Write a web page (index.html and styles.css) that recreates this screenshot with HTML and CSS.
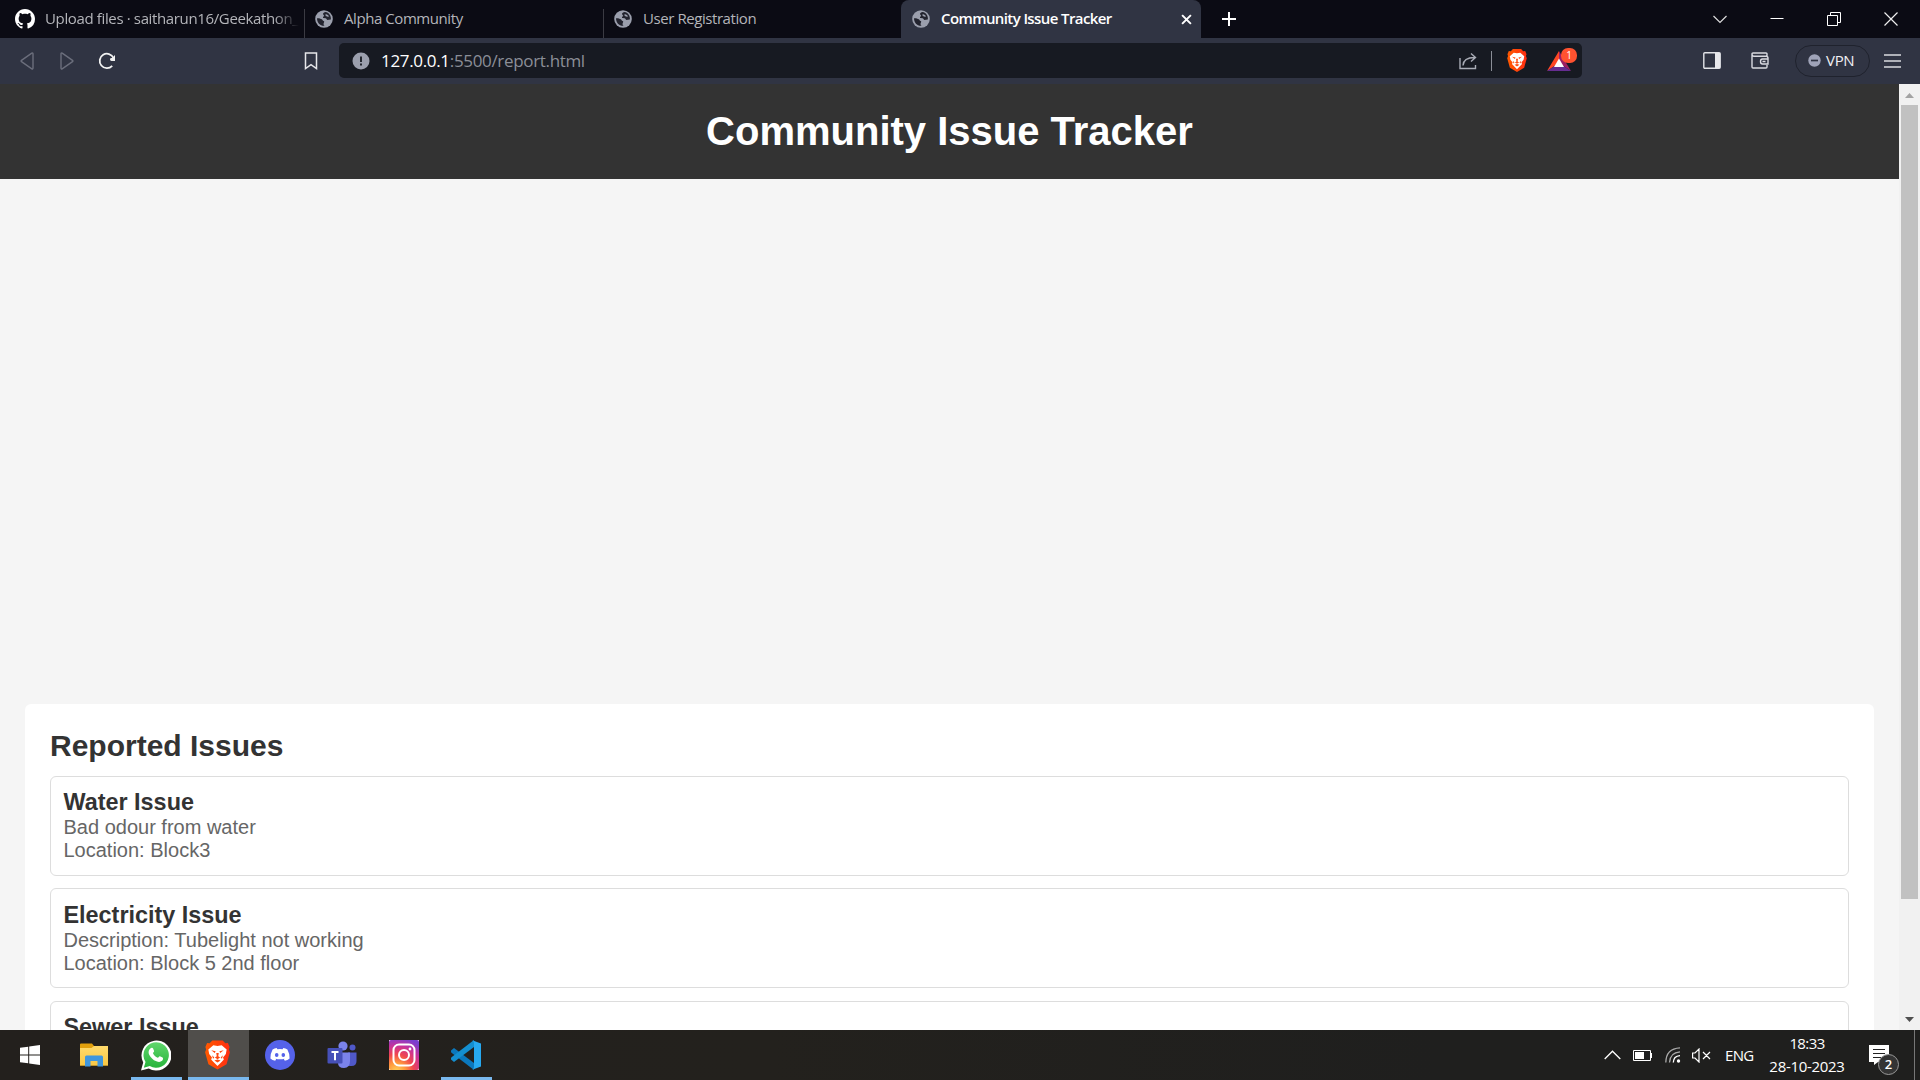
FILE: index.html
```html
<!DOCTYPE html>
<html lang="en">
<head>
<meta charset="utf-8">
<title>Community Issue Tracker</title>
<link rel="stylesheet" href="styles.css">
</head>
<body>
<svg class="defs" width="0" height="0" aria-hidden="true">
  <defs>
    <linearGradient id="lionFill" x1="0" x2="1"><stop offset="0" stop-color="#ff5a00"/><stop offset="1" stop-color="#ff2d12"/></linearGradient>
    <linearGradient id="folderFill" x1="0" y1="0" x2="0" y2="1"><stop offset="0" stop-color="#ffda6b"/><stop offset="1" stop-color="#f8c745"/></linearGradient>
    <linearGradient id="phoneFill" x1="0" y1="0" x2="0" y2="1"><stop offset="0" stop-color="#5fd66c"/><stop offset="1" stop-color="#28b43c"/></linearGradient>
    <radialGradient id="instaFill" cx="0.25" cy="1.05" r="1.15"><stop offset="0" stop-color="#ffd35b"/><stop offset=".25" stop-color="#ff9b3d"/><stop offset=".5" stop-color="#f0464f"/><stop offset=".75" stop-color="#c8329b"/><stop offset="1" stop-color="#7a3fd0"/></radialGradient>
    <symbol id="globe" viewBox="0 0 18 18">
      <circle cx="9" cy="9" r="8.800" fill="#9b9fad"/>
      <path d="M2 8.200c2.300-.1 3.600.5 4.800 1.100 1 .5.700 1.500 1.800 1.800.9.300.7 1.100.2 1.900-.5.900-.3 1.700.7 2.700C5.200 16 2 12.800 2 8.200z" fill="#23242f"/>
      <path d="M10.500 2.100c-1.300.5-2.400.7-2.500 1.900 0 .9 1.100.8 1 1.800-.1.900-1.200.9-1 1.700.2.900 1.900.4 2.800.8 1 .5.700 1.500 1.900 1.600 1.100.1 1.800-.4 3.200-.4C16.300 5.600 13.800 2.700 10.500 2.100z" fill="#23242f"/>
      <path d="M10.500 4.300c1.400-.4 2.900.7 3.400 2.100-1.200.6-2.700.1-3.400-.8z" fill="#9b9fad"/>
    </symbol>
    <symbol id="lion" viewBox="0 0 24 28">
      <path d="M7 0h10l2.500 2.700L22 2.500l1.600 3.800-.7 2.300 1 2.700-3.200 11.500L12 28l-8.700-5.200L.100 11.300l1-2.700-.7-2.300L2 2.500l2.500.2z" fill="url(#lionFill)"/>
      <path d="M8 4.600l4 .7 4-.7 4.800 4.200-.8 4.200-2.700 3.400.8 1.800-2 2.200-4.100 4.100-4.100-4.100-2-2.200.8-1.800L4 13l-.8-4.200z" fill="#fff"/>
      <path d="M6 9.500l4.200.8-.8 1.800zM18 9.500l-4.200.8.8 1.800zM10.800 12h2.400l-.5 3.300 1.800 1.200-2.500 1.500-2.500-1.500 1.800-1.200zM6.800 14.300l2.200 2.200-1.300 1zM17.200 14.300L15 16.500l1.300 1zM9 19.300l3-1 3 1-3 2z" fill="#ff4a10"/>
    </symbol>
  </defs>
</svg>

<div class="tabs">
  <div class="tab tab-first">
    <svg class="favicon octo" viewBox="0 0 16 16"><path fill="#fff" d="M8 0C3.580 0 0 3.580 0 8c0 3.540 2.290 6.530 5.470 7.590.4.070.55-.17.55-.38 0-.19-.010-.82-.010-1.490-2.010.37-2.530-.49-2.690-.94-.09-.23-.48-.94-.82-1.130-.28-.15-.68-.52-.010-.53.63-.010 1.080.58 1.230.82.72 1.210 1.870.87 2.330.66.070-.52.28-.87.51-1.070-1.780-.2-3.640-.89-3.640-3.950 0-.87.31-1.590.82-2.150-.08-.2-.36-1.020.08-2.120 0 0 .67-.21 2.200.82.64-.18 1.320-.27 2-.27s1.360.09 2 .27c1.530-1.040 2.200-.82 2.200-.82.44 1.100.16 1.920.08 2.120.51.56.82 1.270.82 2.150 0 3.070-1.870 3.750-3.650 3.950.29.25.54.73.54 1.480 0 1.070-.010 1.930-.010 2.200 0 .21.15.46.55.38A8.010 8.010 0 0 0 16 8c0-4.420-3.580-8-8-8z"/></svg>
    <span class="tab-title fade">Upload files · saitharun16/Geekathon_P</span>
  </div>
  <div class="tab">
    <svg class="favicon"><use href="#globe"/></svg>
    <span class="tab-title">Alpha Community</span>
  </div>
  <div class="tab last-idle">
    <svg class="favicon"><use href="#globe"/></svg>
    <span class="tab-title">User Registration</span>
  </div>
  <div class="tab active">
    <svg class="favicon"><use href="#globe"/></svg>
    <span class="tab-title">Community Issue Tracker</span>
    <svg class="tab-close" viewBox="0 0 10 10"><path d="M1 1l8 8M9 1L1 9" stroke="#fff" stroke-width="1.800"/></svg>
  </div>
  <svg class="new-tab" viewBox="0 0 16 16"><path d="M8 1v14M1 8h14" stroke="#fff" stroke-width="2"/></svg>
  <div class="window-buttons">
    <svg viewBox="0 0 14 14"><path d="M.5 4l6.500 6.500L13.500 4" fill="none" stroke="#ddd" stroke-width="1.200"/></svg>
    <svg viewBox="0 0 14 14"><path d="M.5 6.500h13" stroke="#fff"/></svg>
    <svg viewBox="0 0 14 14"><path d="M.5 3.500h10v10H.5zM3.500 3V.5h10v10H11" fill="none" stroke="#fff"/></svg>
    <svg viewBox="0 0 14 14"><path d="M.5.5l13 13M13.500.5l-13 13" stroke="#eee" stroke-width="1.200"/></svg>
  </div>
</div>

<div class="toolbar">
  <svg class="nav-back" width="14" height="18" viewBox="0 0 14 18"><path d="M11.800 1.200L1.500 8.300q-.8.700 0 1.400l10.300 7.100q1.200.5 1.200-.8V2q0-1.300-1.200-.8z" fill="none" stroke="#6b6e7c" stroke-width="1.400"/></svg>
  <svg class="nav-forward" width="14" height="18" viewBox="0 0 14 18"><path d="M2.200 1.200l10.300 7.100q.8.700 0 1.400L2.200 16.800Q1 17.300 1 16V2q0-1.300 1.200-.8z" fill="none" stroke="#6b6e7c" stroke-width="1.400"/></svg>
  <svg class="reload" width="18" height="18" viewBox="0 0 18 18"><path d="M14.200 13.800A7.200 7.200 0 1 1 15.500 6" fill="none" stroke="#f2f2f2" stroke-width="1.800"/><path d="M17 3v6h-3.500q-1.500-.2-1.500-1.700T14 6z" fill="#f2f2f2"/></svg>
  <svg class="bookmark" width="14" height="18" viewBox="0 0 14 18"><path d="M1.500 1h11v15.500L7 12.700l-5.500 3.800z" fill="none" stroke="#e6e6ea" stroke-width="1.500"/></svg>
  <div class="address">
    <svg width="18" height="18" viewBox="0 0 18 18"><circle cx="9" cy="9" r="8.500" fill="#9b9fad"/><path d="M9 4.500v5.500M9 11.500v2" stroke="#171a22" stroke-width="1.800"/></svg>
    <span class="url"><b>127.0.0.1</b>:5500/report.html</span>
    <svg class="share" width="18" height="18" viewBox="0 0 18 18"><path d="M1 6v10.500h15.500V13M4 13.500Q4.500 5.500 15.500 5.500M12 1.500l4.500 4-4.500 4" fill="none" stroke="#a9acb6" stroke-width="1.400"/></svg>
    <i class="divider"></i>
    <svg class="shield" width="20" height="23"><use href="#lion"/></svg>
    <div class="rewards">
      <svg width="24" height="20" viewBox="0 0 24 20"><path d="M12 0L0 20l12-8z" fill="#ff4724"/><path d="M12 0l12 20-12-8z" fill="#9e1f63"/><path d="M0 20h24l-12-8z" fill="#662d91"/><path d="M12 7.500l5 8.500H7z" fill="#fff"/></svg>
      <span class="reward-badge">1</span>
    </div>
  </div>
  <svg class="side-panel" width="18" height="17" viewBox="0 0 18 17"><rect x=".8" y=".8" width="16.400" height="15.400" rx="1" fill="none" stroke="#e2e3e8" stroke-width="1.400"/><path d="M12 1h5v15h-5z" fill="#e8e8ec"/></svg>
  <svg class="wallet" width="18" height="17" viewBox="0 0 18 17"><path d="M16 4V2Q16 1 15 1H2Q1 1 1 2v13q0 1 1 1h13q1 0 1-1v-2M1 2q0 2.200 2 2.200h12q2 0 2 2V12h-5.500Q9.500 12 9.500 9.500T11.500 7H17" fill="none" stroke="#d9dae1" stroke-width="1.400"/><path d="M11.500 9.500h3" stroke="#d9dae1" stroke-width="1.500"/></svg>
  <div class="vpn"><svg width="13" height="13" viewBox="0 0 13 13"><circle cx="6.500" cy="6.500" r="6.200" fill="#9fa3b8"/><path d="M3 6.500h7" stroke="#303443" stroke-width="1.700"/></svg><span>VPN</span></div>
  <svg class="menu" width="17" height="14" viewBox="0 0 17 14"><path d="M0 1h17M0 7h17M0 13h17" stroke="#d9dae0" stroke-width="1.400"/></svg>
</div>

<div class="viewport">
  <div class="page">
    <header class="page-header"><h1>Community Issue Tracker</h1></header>
    <main class="reports">
      <h2>Reported Issues</h2>
      <article class="issue"><h3>Water Issue</h3><p>Bad odour from water</p><p>Location: Block3</p></article>
      <article class="issue"><h3>Electricity Issue</h3><p>Description: Tubelight not working</p><p>Location: Block 5 2nd floor</p></article>
      <article class="issue"><h3>Sewer Issue</h3></article>
    </main>
  </div>
  <div class="scrollbar">
    <svg width="21" height="21" viewBox="0 0 21 21"><path d="M6 14h9l-4.500-5z" fill="#a3a3a3"/></svg>
    <i class="thumb"></i>
    <svg width="21" height="21" viewBox="0 0 21 21"><path d="M6 8h9l-4.500 5z" fill="#505050"/></svg>
  </div>
</div>

<div class="taskbar">
  <div class="start"><svg width="20" height="20" viewBox="0 0 20 20"><path d="M0 2.800l8.200-1.100v7.800H0zM9.200 1.500L20 0v9.500H9.200zM0 10.500h8.200v7.800L0 17.200zM9.200 10.500H20V20L9.200 18.500z" fill="#fff"/></svg></div>
  <div class="app"><svg width="28" height="24" viewBox="0 0 28 24"><path d="M0 1.500Q0 .5 1 .5h11l2 2.500H27q1 0 1 1v18.500H0z" fill="#e2a00c"/><path d="M0 5h11.500L14 3h14v19.500H0z" fill="url(#folderFill)"/><path d="M5 23.500V14q0-1.500 1.500-1.500h15Q23 12.500 23 14v9.500h-5.500V18h-7v5.500z" fill="#3f96dd"/></svg></div>
  <div class="app running"><svg width="30" height="31" viewBox="0 0 30 31"><path d="M0 30.500l2.200-8A15 15 0 1 1 7.800 28.400z" fill="#fff"/><path d="M2.800 27.700l1.700-5.800A12.700 12.700 0 1 1 8.800 26z" fill="url(#phoneFill)"/><path d="M10.200 8c.8-.4 1.600-.2 1.900.5l1 2.500c.2.900-1.300 1.600-1.100 2.200 1 2 2.500 3.500 4.800 4.500.7.200 1.300-1.700 2.100-1.400l2.700 1.300c.8.600.5 2.400-.5 3.200-1.600 1.400-3.600 1.300-5.700.5-3.500-1.400-5.700-3.700-7.200-6.600-1.100-2.300-.6-5.500 2-6.700z" fill="#fff"/></svg></div>
  <div class="app running current"><svg width="25" height="30"><use href="#lion"/></svg></div>
  <div class="app"><svg width="30" height="30" viewBox="0 0 30 30"><circle cx="15" cy="15" r="15" fill="#5562ea"/><path d="M11.700 7.900l.7 1.400q2.600-.4 5.200 0l.7-1.400q2.200.3 4.100 1.500 2.300 4 2.200 9-2 1.700-4.800 2.300l-1-1.700 1-.6q-4.800 1.700-9.600 0l1 .6-1 1.700Q7.400 20.100 5.400 18.400q-.1-5 2.200-9 1.900-1.200 4.100-1.500z" fill="#fff"/><ellipse cx="11.700" cy="15" rx="1.800" ry="2" fill="#5562ea"/><ellipse cx="18.300" cy="15" rx="1.800" ry="2" fill="#5562ea"/></svg></div>
  <div class="app"><svg width="30" height="28" viewBox="0 0 30 28"><circle cx="25.500" cy="6.500" r="3" fill="#5059c9"/><path d="M21 11.500h8.500V20q0 5-5 5H21z" fill="#5059c9"/><circle cx="16" cy="5" r="4.600" fill="#7b83eb"/><path d="M11 11.500h12V20q0 7-6 7t-6-5z" fill="#7b83eb"/><path d="M1.500 7h13q1 0 1 1v13.500q0 1-1 1h-13q-1 0-1-1V8q0-1 1-1z" fill="#4650b8"/><path d="M4.500 11h7M8 11v8.200" stroke="#fff" stroke-width="2"/></svg></div>
  <div class="app"><svg width="30" height="30" viewBox="0 0 30 30"><path d="M0 0h30v30H0z" fill="#f7e6ef"/><rect width="30" height="30" rx="2" fill="url(#instaFill)"/><rect x="4.500" y="4.500" width="21" height="21" rx="5.500" fill="none" stroke="#fff" stroke-width="2"/><circle cx="15" cy="15" r="5" fill="none" stroke="#fff" stroke-width="2"/><circle cx="21" cy="9" r="1.400" fill="#fff"/></svg></div>
  <div class="app running"><svg width="30" height="30" viewBox="0 0 30 30"><path d="M0 10.500L3 8l20 15v7L.8 13Q-.5 11.800 0 10.500z" fill="#0b78bd"/><path d="M0 19.500L3 22 23 7V0L.8 17q-1.300 1.200-.8 2.500z" fill="#148fd0"/><path d="M20.500 0L30 3.500v23L20.500 30Q23 29.500 23 27V3q0-2.500-2.500-3z" fill="#27a9f0"/></svg></div>

  <div class="tray">
    <svg width="17" height="10" viewBox="0 0 17 10"><path d="M.7 9L8.500 1.200 16.300 9" fill="none" stroke="#fff" stroke-width="1.300"/></svg>
    <svg class="battery" width="19" height="11" viewBox="0 0 19 11"><path d="M.5.5h17v10H.5zM18.500 3v5" fill="none" stroke="#fff"/><path d="M2 2h9v7H2z" fill="#fff"/></svg>
    <svg class="wifi" width="16" height="16" viewBox="0 0 16 16"><g fill="none" stroke="#aaa" stroke-width="1.300"><path d="M.8 15.500Q1 1.500 15 .8"/><path d="M4.500 15.500Q5 5.500 15 4.800"/></g><path d="M8.300 15.500Q8.500 9 15 8.600" fill="none" stroke="#fff" stroke-width="1.300"/><circle cx="13.500" cy="14" r="1.700" fill="#fff"/></svg>
    <svg class="speaker" width="19" height="15" viewBox="0 0 19 15"><path d="M.6 5H3L7 1v13L3 10H.6zM11 4l7 7M18 4l-7 7" fill="none" stroke="#fff" stroke-width="1.200"/></svg>
    <span class="lang">ENG</span>
    <div class="clock"><span class="time">18:33</span><span class="date">28-10-2023</span></div>
    <div class="notify">
      <svg width="20" height="20" viewBox="0 0 20 20"><path d="M0 0h20v17H9l-4 3v-3H0z" fill="#fff"/><path d="M4 4.500h12M4 8.500h12M4 12.500h8" stroke="#222" stroke-width="1.200"/></svg>
      <span class="notify-badge">2</span>
    </div>
  </div>
</div>
</body>
</html>
```
FILE: styles.css
```css
* { box-sizing: border-box; }
html, body { margin: 0; height: 100%; overflow: hidden; }
body {
  display: flex;
  flex-direction: column;
  width: 1920px;
  height: 1080px;
  font-family: "Liberation Sans", Arial, sans-serif;
}
svg { display: block; flex: none; }
.defs { position: absolute; }
h1, h2, h3, p { margin: 0; }

/* Tab strip */
.tabs {
  display: flex;
  align-items: center;
  flex: none;
  height: 38px;
  background: #0b0b14;
  font: 15px "Open Sans", "Noto Sans", sans-serif;
  color: #b4b5ba;
}
.tab {
  display: flex;
  align-items: center;
  gap: 11px;
  width: 299px;
  height: 38px;
  padding-left: 10px;
  background: linear-gradient(#3b3b43, #3b3b43) right bottom / 1px 29px no-repeat;
}
.tab-first { width: 305px; padding-left: 15px; gap: 10px; }
.last-idle { width: 297px; background: none; }
.favicon { width: 18px; height: 18px; }
.octo { width: 20px; height: 20px; }
.tab-title { padding-bottom: 2px; white-space: nowrap; letter-spacing: -0.43px; }
.fade {
  width: 254px;
  overflow: hidden;
  letter-spacing: -0.36px;
  -webkit-mask-image: linear-gradient(90deg, #000 90%, transparent);
  mask-image: linear-gradient(90deg, #000 90%, transparent);
}
.active {
  width: 300px;
  border-radius: 8px 8px 0 0;
  background: #303443;
  color: #fff;
  font-weight: 600;
  padding-left: 11px;
}
.active .tab-title { letter-spacing: -0.6px; }
.tab-close { width: 11px; height: 11px; margin-left: auto; margin-right: 9px; }
.new-tab { width: 16px; height: 16px; margin-left: 20px; }
.window-buttons {
  display: flex;
  margin-left: auto;
  margin-right: 22px;
  gap: 43px;
}
.window-buttons svg { width: 14px; height: 14px; }

/* Address row */
.toolbar {
  display: flex;
  align-items: center;
  flex: none;
  height: 46px;
  padding-bottom: 1px;
  background: #303443;
}
.nav-back { margin-left: 20px; }
.nav-forward { margin-left: 26px; }
.reload { margin-left: 24px; }
.bookmark { margin-left: 188px; }
.address {
  display: flex;
  align-items: center;
  width: 1243px;
  height: 35px;
  margin-left: 21px;
  padding-left: 13px;
  border-radius: 5px;
  background: #171a22;
}
.url {
  margin-left: 11px;
  padding-bottom: 1px;
  font: 17px "Open Sans", "Noto Sans", sans-serif;
  letter-spacing: -0.33px;
  color: #8b8e97;
}
.url b { font-weight: 400; color: #fff; }
.share { margin-left: auto; }
.divider { width: 1px; height: 20px; margin-left: 14px; background: #8b8e97; }
.shield { margin-left: 15px; }
.rewards { position: relative; margin: 0 11px 0 20px; }
.reward-badge {
  position: absolute;
  left: 14px;
  top: -3px;
  width: 16px;
  height: 15px;
  border-radius: 7px;
  background: #ff5230;
  color: #fff;
  font: 10px/15px "Open Sans", sans-serif;
  text-align: center;
}
.side-panel { margin-left: 121px; }
.wallet { margin-left: 30px; }
.vpn {
  display: flex;
  align-items: center;
  gap: 5px;
  width: 75px;
  height: 32px;
  margin-left: 26px;
  padding-left: 12px;
  border: 1px solid #1f222d;
  border-radius: 16px;
  color: #f0f0f4;
  font: 15px "Open Sans", "Noto Sans", sans-serif;
  letter-spacing: -0.3px;
}
.vpn span { padding-bottom: 2px; }
.menu { margin-left: 14px; }

/* Web page */
.viewport { display: flex; flex: none; height: 946px; overflow: hidden; background: #f5f5f5; }
.page { width: 1899px; }
.page-header {
  display: flex;
  justify-content: center;
  height: 95px;
  padding-top: 25px;
  background: #333;
  color: #fff;
}
h1 { font-size: 40px; line-height: 45px; }
.reports {
  height: 600px;
  margin: 525px 25px 0;
  padding: 25px 25px 0;
  border-radius: 6px;
  background: #fff;
}
h2 { height: 47px; font-size: 30px; line-height: 34px; color: #333; }
.issue {
  height: 100px;
  margin-bottom: 12.4px;
  padding: 12.4px 12.5px;
  border: 1px solid #ddd;
  border-radius: 6px;
  color: #666;
}
h3 { font-size: 23.4px; line-height: 27px; color: #333; }
p { font-size: 20px; line-height: 23px; }
.scrollbar {
  display: flex;
  flex-direction: column;
  width: 21px;
  background: #f1f1f1;
}
.thumb { width: 17px; height: 794px; margin: 0 2px auto; background: #c1c1c1; }

/* Taskbar */
.taskbar {
  display: flex;
  flex: none;
  height: 50px;
  background: linear-gradient(90deg, #23201d, #23211d 40%, #1f1f1e 75%);
  font: 15px "Open Sans", "Noto Sans", sans-serif;
  color: #fff;
}
.start { display: flex; align-items: center; justify-content: center; width: 60px; margin-right: 4px; }
.app {
  display: flex;
  align-items: center;
  justify-content: center;
  width: 61px;
  margin-right: 1px;
  padding-right: 2px;
}
.running { background: linear-gradient(#79b8ee, #79b8ee) center bottom / 51px 3px no-repeat; }
.current { background: linear-gradient(#79b8ee, #79b8ee) center bottom / 61px 3px no-repeat #504e4b; }
.tray {
  display: flex;
  align-items: center;
  margin-left: auto;
  width: 311px;
  margin-right: 5px;
  border-right: 1px solid #777;
}
.battery { margin-left: 12px; }
.wifi { margin-left: 13px; }
.speaker { margin-left: 11px; }
.lang { width: 30px; margin-left: 14px; letter-spacing: -0.7px; }
.clock {
  display: flex;
  flex-direction: column;
  align-items: center;
  width: 84px;
  margin-left: 10px;
  line-height: 23px;
}
.time { letter-spacing: -0.6px; }
.date { letter-spacing: -0.3px; }
.notify { position: relative; margin-left: 20px; }
.notify-badge {
  position: absolute;
  left: 9px;
  top: 9px;
  width: 21px;
  height: 21px;
  border: 1px solid #999;
  border-radius: 50%;
  background: #343434;
  font: 600 13px/19px "Open Sans", sans-serif;
  text-align: center;
}
```
